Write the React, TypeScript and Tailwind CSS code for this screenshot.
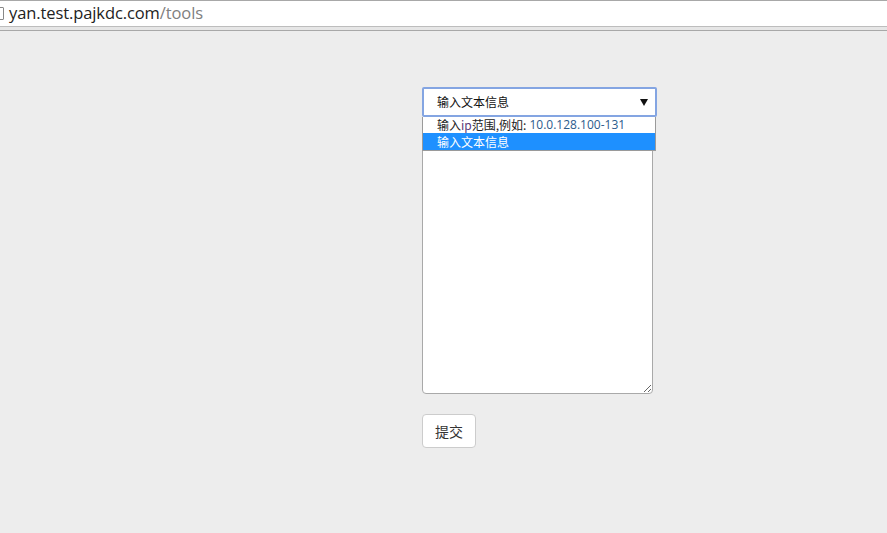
import React from "react";

export default function App() {
  return (
    <div className="w-[887px] h-[533px] bg-[#ededed] flex flex-col overflow-hidden" style={{ fontFamily: '"Noto Sans CJK SC", sans-serif' }}>
      {/* address bar */}
      <div className="h-[26px] bg-white border-t border-[#a8a8a8] flex items-center relative shrink-0">
        <div className="absolute left-[-6px] top-[6px] w-[10px] h-[13px] border border-[#888] rounded-[1px] bg-white" />
        <span className="ml-[9px] text-[16.5px] leading-none text-[#222] tracking-[-0.1px]" style={{ fontFamily: '"Open Sans", "Noto Sans", sans-serif' }}>
          yan.test.pajkdc.com<span className="text-[#808080]">/tools</span>
        </span>
      </div>
      <div className="h-[5px] shrink-0 border-t border-[#bdbdbd] border-b border-b-[#a8a8a8] bg-[#e6e6e6]" />

      {/* content */}
      <div className="pl-[422px] pt-[56px] flex flex-col items-start">
        <div className="relative">
          <div className="w-[235px] h-[30px] bg-white border-2 border-[#84a5e2] rounded-[2px] flex items-center justify-between pl-[13px] pr-[6px]">
            <span className="text-[12px] leading-none text-[#111]">输入文本信息</span>
            <svg width="8" height="7" viewBox="0 0 8 7" className="mr-[1px]">
              <path d="M0 0H8L4 7Z" fill="#111" />
            </svg>
          </div>
          <div className="absolute left-0 top-[30px] w-[234px] z-10 bg-white border-x border-b border-[#9a9a9a] flex flex-col">
            <div className="h-[16px] pl-[14px] flex items-center text-[12px] leading-none text-[#222] whitespace-nowrap">
              输入<span className="text-[#5a3a7a]">ip</span>范围,例如: <span className="ml-[3px] text-[#2b5b8c]" style={{ fontFamily: '"Open Sans", "Noto Sans", sans-serif' }}>10.0.128.100-131</span>
            </div>
            <div className="h-[17px] pl-[14px] flex items-center text-[12px] leading-none text-white bg-[#1e90ff]">
              输入文本信息
            </div>
          </div>
          <textarea
            className="block mt-[10px] w-[231px] h-[267px] bg-white border border-[#a9a9a9] rounded-[4px] outline-none resize"
            defaultValue=""
          />
        </div>
        <button className="mt-[20px] w-[54px] h-[34px] bg-white border border-[#cccccc] rounded-[4px] text-[14px] text-[#333] flex items-center justify-center">
          提交
        </button>
      </div>
    </div>
  );
}
